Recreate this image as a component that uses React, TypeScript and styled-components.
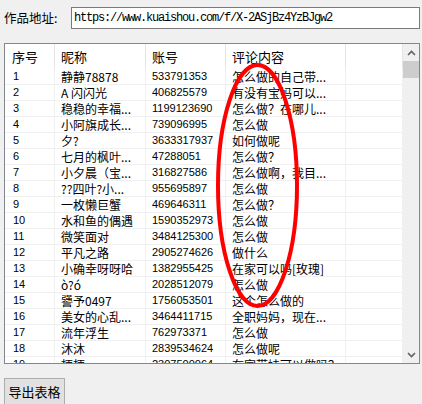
import React from 'react';
import styled, { createGlobalStyle } from 'styled-components';

const GlobalStyle = createGlobalStyle`
  html, body {
    margin: 0;
    padding: 0;
    background: #f0f0f0;
  }
  * {
    box-sizing: border-box;
  }
`;

const Window = styled.div`
  position: relative;
  width: 422px;
  height: 404px;
  overflow: hidden;
  background: #f0f0f0;
  display: flex;
  flex-direction: column;
  padding: 7px 2px 0 4px;
  font-family: 'Noto Sans CJK SC', 'Liberation Sans', sans-serif;
  color: #000;
`;

const UrlRow = styled.div`
  display: flex;
  align-items: center;
  height: 22px;
`;

const Label = styled.span`
  width: 67px;
  font-size: 12.5px;
  line-height: 22px;
  white-space: nowrap;
`;

const UrlInput = styled.div`
  flex: 1;
  height: 22px;
  background: #fff;
  border: 1px solid #7a7a7a;
  font-family: 'Liberation Mono', 'Noto Sans CJK SC', monospace;
  font-size: 12px;
  letter-spacing: -1.2px;
  line-height: 20px;
  padding-left: 2px;
  white-space: nowrap;
  overflow: hidden;
`;

const ListView = styled.div`
  margin-top: 14px;
  height: 321px;
  border: 1px solid #828790;
  background: #fff;
  display: flex;
`;

const ListBody = styled.div`
  width: 398px;
  overflow: hidden;
`;

const Grid = styled.div`
  display: grid;
  grid-template-columns: 50px 91px 80px 120px 57px;
`;

const HeaderCell = styled.div<{ $first?: boolean }>`
  height: 25px;
  line-height: 25px;
  font-size: 13px;
  padding-left: ${p => (p.$first ? '7px' : '6px')};
  border-right: 1px solid #e5e5e5;
  white-space: nowrap;
`;

const Cell = styled.div<{ $first?: boolean; $num?: boolean }>`
  height: 16px;
  line-height: 15px;
  font-size: ${p => (p.$num ? '11px' : '12px')};
  font-family: ${p =>
    p.$num ? "'Liberation Sans', sans-serif" : "'Noto Sans CJK SC', 'Liberation Sans', sans-serif"};
  padding-left: ${p => (p.$first ? '8px' : '6px')};
  border-right: 1px solid #f0f0f0;
  border-bottom: 1px solid #f0f0f0;
  white-space: nowrap;
  overflow: hidden;
`;

const ScrollBar = styled.div`
  width: 16px;
  background: #f0f0f0;
  display: flex;
  flex-direction: column;
  align-items: center;
`;

const ArrowBox = styled.div`
  height: 17px;
  width: 16px;
  display: flex;
  align-items: center;
  justify-content: center;
`;

const Thumb = styled.div`
  width: 16px;
  height: 17px;
  background: #cdcdcd;
`;

const Track = styled.div`
  flex: 1;
`;

const ExportButton = styled.button`
  margin-top: 14px;
  width: 61px;
  height: 27px;
  background: #e1e1e1;
  border: 1px solid #adadad;
  font-family: 'Noto Sans CJK SC', sans-serif;
  font-size: 13px;
  padding: 0;
  color: #000;
`;

const Overlay = styled.svg`
  position: absolute;
  left: 0;
  top: 0;
  pointer-events: none;
`;

const rows: [string, string, string][] = [
  ['静静78878', '533791353', '怎么做的自己带...'],
  ['A 闪闪光', '406825579', '有没有宝妈可以...'],
  ['稳稳的幸福...', '1199123690', '怎么做？在哪儿...'],
  ['小阿旗成长...', '739096995', '怎么做'],
  ['夕?', '3633317937', '如何做呢'],
  ['七月的枫叶...', '47288051', '怎么做？'],
  ['小夕晨（宝...', '316827586', '怎么做啊，我目...'],
  ['??四叶?小...', '955695897', '怎么做'],
  ['一枚懒巨蟹', '469646311', '怎么做？'],
  ['水和鱼的偶遇', '1590352973', '怎么做'],
  ['微笑面对', '3484125300', '怎么做'],
  ['平凡之路', '2905274626', '做什么'],
  ['小确幸呀呀哈', '1382955425', '在家可以吗[玫瑰]'],
  ['ò?ó', '2028512079', '怎么做'],
  ['謽予0497', '1756053501', '这个怎么做的'],
  ['美女的心乱...', '3464411715', '全职妈妈，现在...'],
  ['流年浮生', '762973371', '怎么做'],
  ['沐沐', '2839534624', '怎么做呢'],
  ['梗梗', '2307500064', '在家带娃可以做吗？'],
];

const Chevron: React.FC<{ down?: boolean }> = ({ down }) => (
  <svg width="9" height="6" viewBox="0 0 9 6">
    <path
      d={down ? 'M1 1 L4.5 4.5 L8 1' : 'M1 5 L4.5 1.5 L8 5'}
      fill="none"
      stroke="#606060"
      strokeWidth="1.6"
    />
  </svg>
);

const App: React.FC = () => {
  return (
    <Window>
      <GlobalStyle />
      <UrlRow>
        <Label>作品地址:</Label>
        <UrlInput>https://www.kuaishou.com/f/X-2ASjBz4YzBJgw2</UrlInput>
      </UrlRow>
      <ListView>
        <ListBody>
          <Grid>
            <HeaderCell $first>序号</HeaderCell>
            <HeaderCell>昵称</HeaderCell>
            <HeaderCell>账号</HeaderCell>
            <HeaderCell>评论内容</HeaderCell>
            <HeaderCell />
            {rows.map((r, i) => (
              <React.Fragment key={i}>
                <Cell $first $num>{i + 1}</Cell>
                <Cell>{r[0]}</Cell>
                <Cell $num>{r[1]}</Cell>
                <Cell>{r[2]}</Cell>
                <Cell />
              </React.Fragment>
            ))}
          </Grid>
        </ListBody>
        <ScrollBar>
          <ArrowBox>
            <Chevron />
          </ArrowBox>
          <Thumb />
          <Track />
          <ArrowBox>
            <Chevron down />
          </ArrowBox>
        </ScrollBar>
      </ListView>
      <div>
        <ExportButton>导出表格</ExportButton>
      </div>
      <Overlay width="422" height="404">
        <ellipse cx="257.5" cy="185.5" rx="39.5" ry="120.5" fill="none" stroke="#ff0000" strokeWidth="4" />
      </Overlay>
    </Window>
  );
};

export default App;
